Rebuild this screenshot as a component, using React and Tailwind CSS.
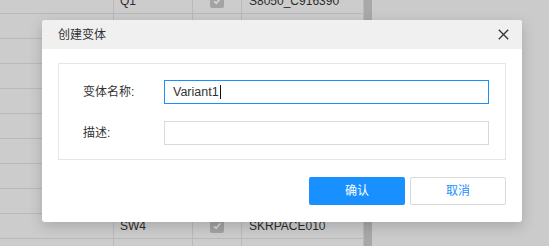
import React from 'react';

const rows = [
  { code: 'Q1', part: 'S8050_C916390' },
  { code: '', part: '' },
  { code: '', part: '' },
  { code: '', part: '' },
  { code: '', part: '' },
  { code: '', part: '' },
  { code: '', part: '' },
  { code: '', part: '' },
  { code: '', part: '' },
  { code: 'SW4', part: 'SKRPACE010' },
  { code: '', part: '' },
];

const CheckBox = () => (
  <span className="flex h-[14px] w-[14px] items-center justify-center rounded-[2px] bg-[#a3a3a3]">
    <svg width="10" height="10" viewBox="0 0 10 10" fill="none">
      <path d="M2 5.2 L4.2 7.4 L8.2 2.6" stroke="#d9d9d9" strokeWidth="1.6" />
    </svg>
  </span>
);

const BackgroundTable = () => (
  <div className="flex h-full">
    <div className="mt-[-11px] flex w-[364px] flex-col">
      {rows.map((r, i) => (
        <div key={i} className="flex h-[25px] shrink-0 border-b border-[#b9b9b9]">
          <div className="w-[114px] shrink-0 border-r border-[#b9b9b9]" />
          <div className="flex w-[79px] shrink-0 items-center border-r border-[#b9b9b9] px-[6px] text-[12px] text-[#2b2b2b]">
            {r.code}
          </div>
          <div className="flex w-[49px] shrink-0 items-center justify-center border-r border-[#b9b9b9]">
            {r.code && <CheckBox />}
          </div>
          <div className="flex w-[122px] shrink-0 items-center border-r border-[#b9b9b9] px-[7px] text-[12px] text-[#2b2b2b]">
            {r.part}
          </div>
        </div>
      ))}
    </div>
    <div className="w-[8px] bg-[#a8a8a8]" />
    <div className="flex-1 bg-[#cbcbcb]" />
  </div>
);

export default function App() {
  return (
    <div className="relative h-[246px] w-[549px] overflow-hidden bg-[#cccccc] font-['Liberation_Sans','Noto_Sans_CJK_SC',sans-serif]">
      <BackgroundTable />

      {/* Dialog */}
      <div className="absolute left-[42px] top-[20px] flex h-[202px] w-[480px] flex-col overflow-hidden rounded-[3px] bg-white shadow-[0_4px_14px_rgba(0,0,0,0.18)]">
        <div className="flex h-[29px] shrink-0 items-center justify-between bg-[#f0f0f0] pl-[16px] pr-[13px]">
          <span className="text-[12px] text-[#333333]">创建变体</span>
          <svg width="11" height="11" viewBox="0 0 11 11" fill="none">
            <path d="M0.8 0.8 L10.2 10.2 M10.2 0.8 L0.8 10.2" stroke="#333333" strokeWidth="1.3" />
          </svg>
        </div>

        <div className="flex flex-col px-[16px] pt-[14px]">
          <div className="flex h-[97px] flex-col gap-[17px] border border-[#e6e6e6] pl-[24px] pr-[16px] pt-[16px]">
            <div className="flex items-center">
              <span className="w-[81px] shrink-0 text-[12px] text-[#333333]">变体名称:</span>
              <div className="flex h-[24px] flex-1 items-center border border-[#1890ff] px-[8px] text-[12.5px] text-[#333333]">
                Variant1
                <span className="ml-[1px] h-[14px] w-[1px] bg-[#111111]" />
              </div>
            </div>
            <div className="flex items-center">
              <span className="w-[81px] shrink-0 text-[12px] text-[#333333]">描述:</span>
              <div className="h-[24px] flex-1 border border-[#d9d9d9]" />
            </div>
          </div>

          <div className="flex justify-end gap-[5px] pt-[17px]">
            <button className="flex h-[28px] w-[96px] items-center justify-center rounded-[2px] bg-[#1890ff] text-[12px] text-white">
              确认
            </button>
            <button className="flex h-[28px] w-[96px] items-center justify-center rounded-[2px] border border-[#d9d9d9] bg-white text-[12px] text-[#1890ff]">
              取消
            </button>
          </div>
        </div>
      </div>
    </div>
  );
}
